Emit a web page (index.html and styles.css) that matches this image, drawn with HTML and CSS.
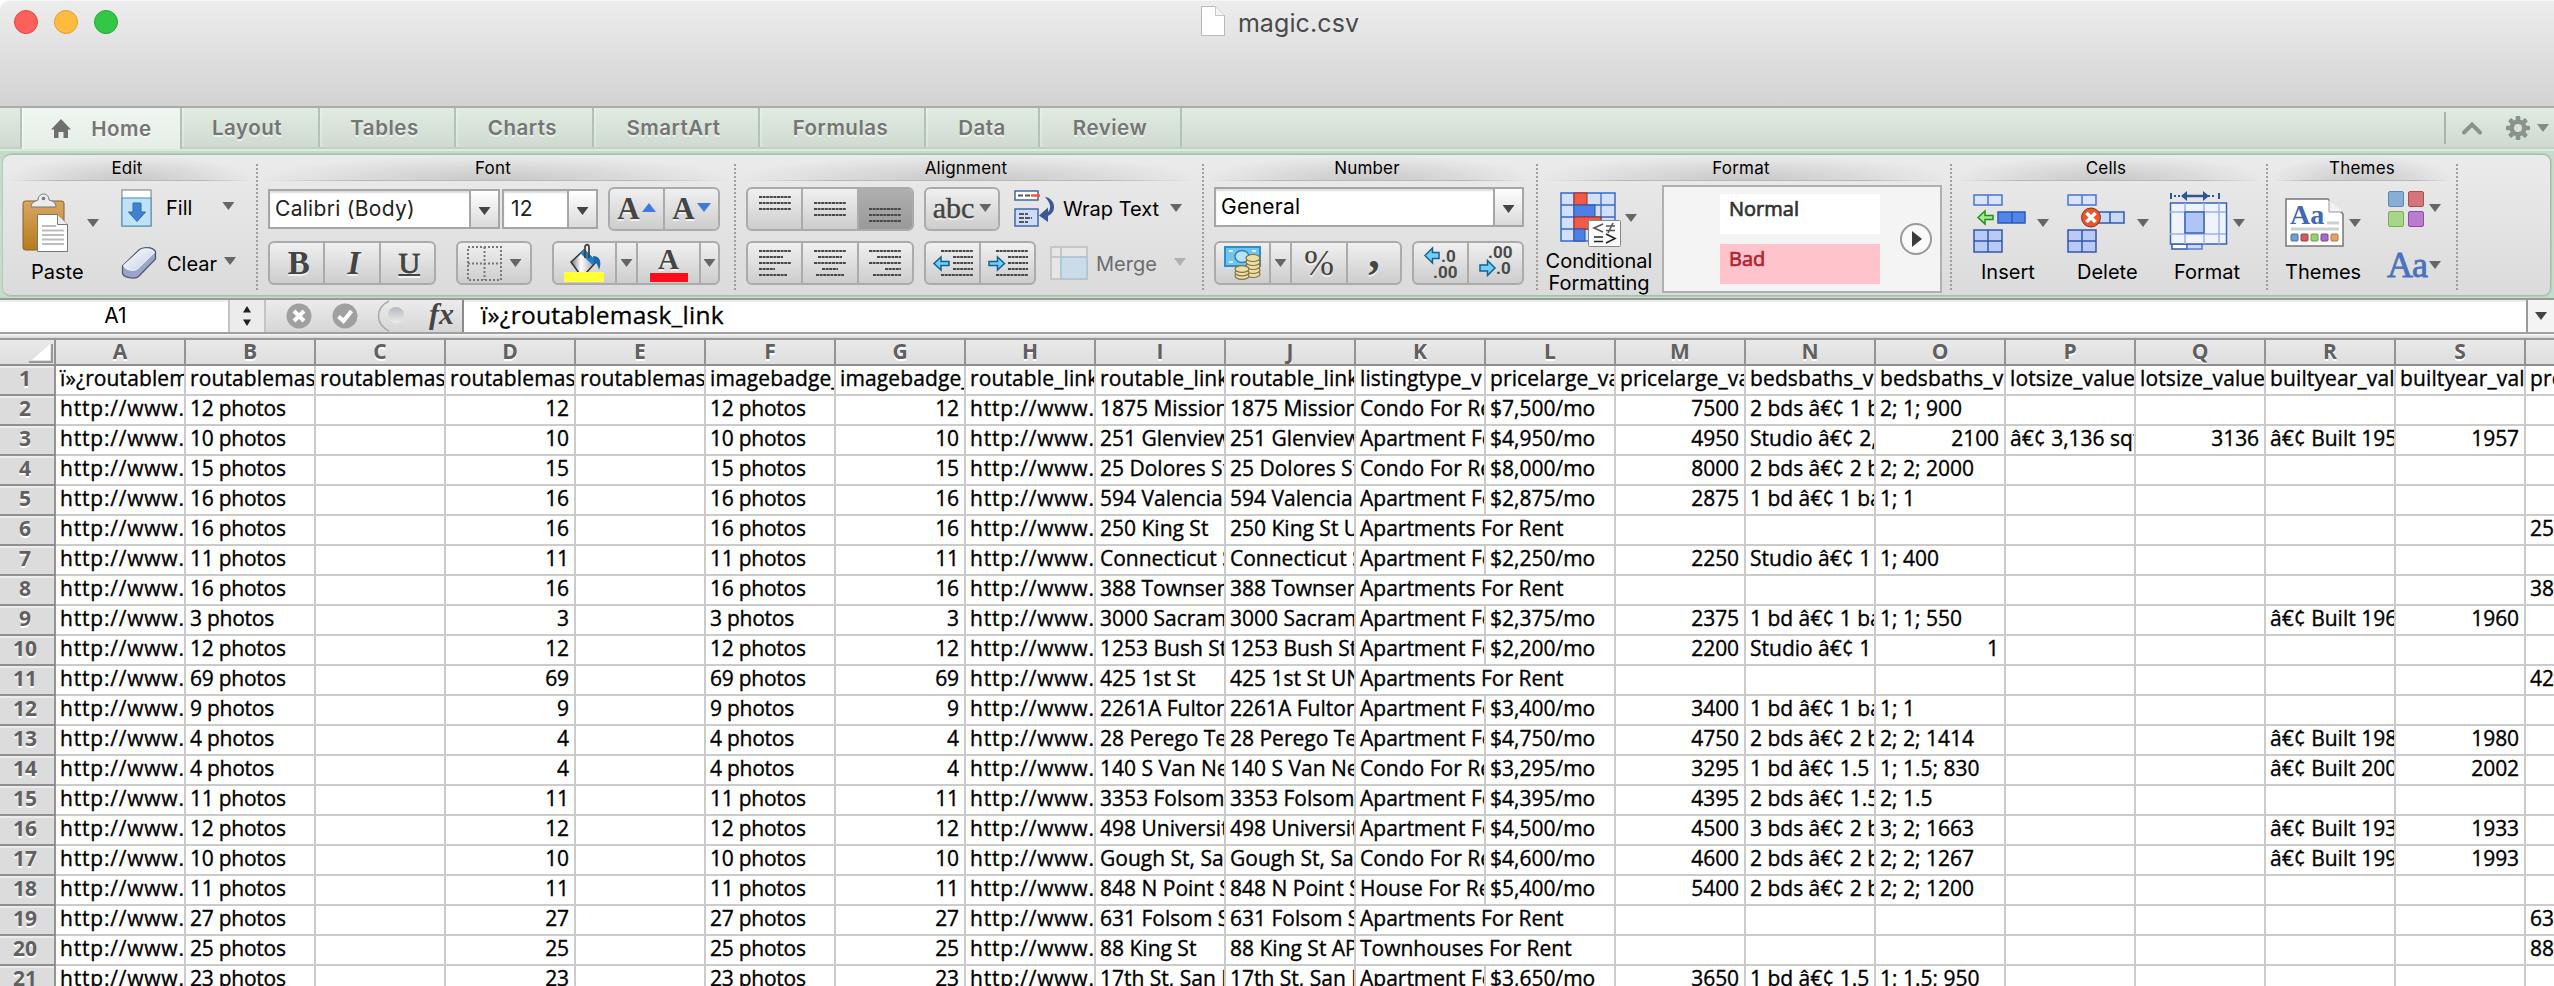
FILE: index.html
```html
<!DOCTYPE html>
<html lang="en">
<head>
<meta charset="utf-8">
<title>magic.csv</title>
<link rel="stylesheet" href="styles.css">
</head>
<body>
<div class="window">
  <header class="titlebar">
    <div class="lights"><i class="light red"></i><i class="light amber"></i><i class="light green"></i></div>
    <div class="doc-title">
      <svg width="26" height="32" viewBox="0 0 26 32"><path d="M1.500 1.500h14l9 9v20h-23z" fill="#fff" stroke="#b9b9b9"/><path d="M15.500 1.500v9h9" fill="#f4f4f4" stroke="#c4c4c4"/></svg>
      <span>magic.csv</span>
    </div>
  </header>

  <nav class="tabs">
    <span class="tab-edge"></span>
    <span class="tab home active"><svg width="20" height="20" viewBox="0 0 20 20"><path d="M10 0 20 10.500h-3V19h-4.500v-6h-5v6H3v-8.500H0z" fill="#6f6f6f"/></svg>Home</span>
    <span class="tab t-layout">Layout</span>
    <span class="tab t-tables">Tables</span>
    <span class="tab t-charts">Charts</span>
    <span class="tab t-smart">SmartArt</span>
    <span class="tab t-formulas">Formulas</span>
    <span class="tab t-data">Data</span>
    <span class="tab t-review">Review</span>
    <span class="tab-tools">
      <svg class="chev" width="20" height="14" viewBox="0 0 20 14"><path d="M2 11.500 10 3.500l8 8" fill="none" stroke="#8b928c" stroke-width="4" stroke-linecap="round"/></svg>
      <svg class="gear" width="24" height="24" viewBox="-12 -12 24 24"><g fill="#8b928c"><circle r="8.500"/><g id="teeth"><rect x="-2.300" y="-12" width="4.600" height="24" rx="1"/><rect x="-12" y="-2.300" width="24" height="4.600" rx="1"/></g><use href="#teeth" transform="rotate(45)"/></g><circle r="4" fill="#d8e2d9"/></svg>
      <i class="caret soft"></i>
    </span>
  </nav>

  <div class="ribbon-wrap">
  <section class="ribbon">
    <div class="group g-edit">
      <h2>Edit</h2>
      <div class="body">
        <div class="big paste">
          <div class="pic">
            <svg width="48" height="60" viewBox="0 0 48 60"><defs><linearGradient id="wood" x2="0" y2="1"><stop offset="0" stop-color="#d9a765"/><stop offset="1" stop-color="#b67d18"/></linearGradient></defs>
              <rect x="1" y="8" width="41" height="49" rx="2.500" fill="url(#wood)" stroke="#8a5f22"/>
              <path d="M9 14c0-5 5-6 7-7 0-3 2-6 5.500-6S27 4 27 7c3 1 7 2 7 7z" fill="#ececec" stroke="#777"/><circle cx="21.500" cy="5.500" r="1.800" fill="#777"/>
              <path d="M15.500 21.500h20l10 10v27h-30z" fill="#fff" stroke="#777"/><path d="M35.500 21.500v10h10" fill="#eee" stroke="#777"/>
              <path d="M20 33h14M20 37.500h22M20 42h22M20 46.500h22M20 51h22" stroke="#bdbdbd" stroke-width="1.800"/></svg>
            <i class="caret"></i>
          </div>
          <span>Paste</span>
        </div>
        <div class="stack">
          <div class="row fill"><svg width="32" height="38" viewBox="0 0 32 38"><rect x="1" y="1" width="29" height="36" fill="#fff" stroke="#777"/><rect x="1" y="9" width="29" height="28" fill="#bfe3f6" stroke="#4d87b5"/><path d="M12 14h8v9h4.500L16 32.500 7.500 23H12z" fill="#3f83cf" stroke="#2d6bb0"/></svg><span>Fill</span><i class="caret"></i></div>
          <div class="row clear"><svg width="36" height="34" viewBox="0 0 36 34"><defs><linearGradient id="rub" x2="1" y2="1"><stop offset="0" stop-color="#fff"/><stop offset="1" stop-color="#c3cce4"/></linearGradient></defs><path d="M1.500 20 18 4c3-3 14-4 16.500 1.500V13L17.500 30.500c-3 3-16 1.500-16-4z" fill="#9ba6c6" stroke="#4f5a78" stroke-width="1.300"/><path d="M2.500 19.500 19 4.500c3-2.500 12-2.500 14.500 2L16.500 23c-3 2.500-12 1.500-14-3.500z" fill="url(#rub)" stroke="#fff" stroke-width=".8"/></svg><span>Clear</span><i class="caret"></i></div>
        </div>
      </div>
    </div>

    <div class="group g-font">
      <h2>Font</h2>
      <div class="body two">
        <div class="line">
          <div class="combo font-name"><span>Calibri (Body)</span><b><i class="caret dark"></i></b></div>
          <div class="combo font-size"><span>12</span><b><i class="caret dark"></i></b></div>
          <div class="seg size-seg"><span class="serif">A<svg width="14" height="9" viewBox="0 0 14 9"><path d="M0 9 7 0l7 9z" fill="#3f7bdc"/></svg></span><span class="serif">A<svg width="14" height="9" viewBox="0 0 14 9"><path d="M0 0h14L7 9z" fill="#3f7bdc"/></svg></span></div>
        </div>
        <div class="line">
          <div class="seg biu"><span class="serif bold">B</span><span class="serif ital">I</span><span class="serif under">U</span></div>
          <div class="seg border-seg"><span><svg width="35" height="35" viewBox="0 0 35 35"><path d="M1 1h33v33H1zM17.500 1v33M1 17.500h33" fill="none" stroke="#777" stroke-width="2" stroke-dasharray="2 2"/></svg><i class="caret"></i></span></div>
          <div class="seg color-seg">
            <span class="w1"><svg width="42" height="40" viewBox="0 0 42 40"><defs><linearGradient id="tin"><stop offset="0" stop-color="#777"/><stop offset=".4" stop-color="#fff"/><stop offset="1" stop-color="#999"/></linearGradient></defs><path d="M7 19 20 7l12 12-10 11H15z" fill="url(#tin)" stroke="#333" stroke-width="1.500"/><path d="M16 10l4-4 12 12-3.500 4z" fill="#1b7fd0"/><path d="M29 13c7 0 9 6 6 14-1-4-2-7-5-9z" fill="#1768ad"/><path d="M21 15V4c0-3 4-3 4 0v11" fill="none" stroke="#444" stroke-width="1.800"/><rect x="0" y="29" width="40" height="10" fill="#ffff35"/></svg></span>
            <span class="w2"><i class="caret"></i></span>
            <span class="w3 serif fontcolor">A<em></em></span>
            <span class="w4"><i class="caret"></i></span>
          </div>
        </div>
      </div>
    </div>

    <div class="group g-align">
      <h2>Alignment</h2>
      <div class="body two">
        <div class="line">
          <div class="seg s3">
            <span><svg class="ln" width="32" height="32"><path d="M0 4h32M0 10h32M0 16h32"/></svg></span>
            <span><svg class="ln" width="32" height="32"><path d="M0 10h32M0 16h32M0 22h32"/></svg></span>
            <span class="pressed"><svg class="ln" width="32" height="32"><path d="M0 16h32M0 22h32M0 28h32"/></svg></span>
          </div>
          <div class="seg abc"><span class="serif">abc<i class="caret"></i></span></div>
          <div class="row wrap"><svg width="42" height="38" viewBox="0 0 42 38"><rect x="1" y="1" width="23" height="9" fill="#fff" stroke="#4466a8" stroke-width="1.500"/><path d="M4 5.500h12" stroke="#555" stroke-width="2" stroke-dasharray="5 2"/><path d="M17 5.500h9" stroke="#ff5238" stroke-width="2.500"/><rect x="1" y="19" width="23" height="17" fill="#cddcf8" stroke="#4466a8" stroke-width="1.500"/><path d="M5 24h9M5 28h13M5 32h9" stroke="#555" stroke-width="1.800" stroke-dasharray="5 1"/><path d="M31 7c9 1 12 12 6 17l-3 2v6l-9-6.500 9-8V22c4-4 2-10-3-15z" fill="#3b5796"/></svg><span>Wrap Text</span><i class="caret"></i></div>
        </div>
        <div class="line">
          <div class="seg s3">
            <span><svg class="ln" width="32" height="32"><path d="M0 4h32M0 10h24M0 16h32M0 22h16M0 28h28"/></svg></span>
            <span><svg class="ln" width="32" height="32"><path d="M0 4h32M4 10h24M0 16h32M8 22h16M2 28h28"/></svg></span>
            <span><svg class="ln" width="32" height="32"><path d="M0 4h32M8 10h24M0 16h32M16 22h16M4 28h28"/></svg></span>
          </div>
          <div class="seg indent">
            <span><svg class="ln" width="40" height="32"><path d="M8 4h32M20 10h20M20 16h20M20 22h20M8 28h32"/><path class="arr" d="M1 16.500 8 10v4.500h8v4H8V23z"/></svg></span>
            <span><svg class="ln" width="40" height="32"><path d="M8 4h32M20 10h20M20 16h20M20 22h20M8 28h32"/><path class="arr" d="M16.500 16.500 9.500 10v4.500H1v4h8.500V23z"/></svg></span>
          </div>
          <div class="row merge"><svg width="38" height="34" viewBox="0 0 38 34"><rect x="1" y="1" width="36" height="32" fill="#e6e6e6" stroke="#c6c6c6" stroke-width="2"/><path d="M11 1v32M1 11h36" stroke="#c6c6c6" stroke-width="2"/><rect x="11" y="11" width="26" height="22" fill="#ccdbe8" stroke="#a9c4d8" stroke-width="1.500"/></svg><span>Merge</span><i class="caret faint"></i></div>
        </div>
      </div>
    </div>

    <div class="group g-number">
      <h2>Number</h2>
      <div class="body two">
        <div class="line">
          <div class="combo num"><span>General</span><b><i class="caret dark"></i></b></div>
        </div>
        <div class="line">
          <div class="seg money">
            <span class="w1"><svg width="38" height="34" viewBox="0 0 38 34"><rect x="1" y="1" width="35" height="19" fill="#74c3ee" stroke="#2c8fc9" stroke-width="2"/><ellipse cx="18" cy="10.500" rx="7" ry="6" fill="#b8e2f7" stroke="#2c80b5" stroke-width="1.500"/><path d="M5 5h4M5 16h4M28 5h4" stroke="#d7f0fb" stroke-width="2"/><g fill="#e9dfad" stroke="#85733a" stroke-width="1.200"><ellipse cx="29" cy="28" rx="7" ry="3.500"/><ellipse cx="29" cy="24" rx="7" ry="3.500"/><ellipse cx="29" cy="20" rx="7" ry="3.500"/><ellipse cx="29" cy="16" rx="7" ry="3.500"/><ellipse cx="29" cy="12" rx="7" ry="3.500"/><ellipse cx="18" cy="30" rx="7" ry="3.300"/><ellipse cx="18" cy="26.500" rx="7" ry="3.300"/><ellipse cx="18" cy="23" rx="7" ry="3.300"/></g></svg></span>
            <span class="w2"><i class="caret"></i></span>
            <span class="w3 serif pct">%</span>
            <span class="w4 serif comma">,</span>
          </div>
          <div class="seg dec">
            <span><svg width="36" height="36" viewBox="0 0 36 36"><path class="arr" d="M2 10.500 9.500 3v4.500H16v6H9.500V18z"/><text x="18" y="17">.0</text><text x="10" y="33">.00</text></svg></span>
            <span><svg width="36" height="36" viewBox="0 0 36 36"><text x="10" y="13">.00</text><path class="arr" d="M17 23 9.500 15.500V20H2v6h7.500v4.500z"/><text x="18" y="29">.0</text></svg></span>
          </div>
        </div>
      </div>
    </div>

    <div class="group g-format">
      <h2>Format</h2>
      <div class="body">
        <div class="big cond">
          <div class="pic">
            <svg width="62" height="56" viewBox="0 0 62 56"><rect x="1" y="1" width="54" height="48" fill="#d3e0fb" stroke="#3a69c4" stroke-width="1.500"/><path d="M14 1v48M41 1v48M1 13h54M1 25h54M1 37h54" stroke="#3a69c4" stroke-width="1.300"/><rect x="14" y="1" width="13" height="12" fill="#f25a48" stroke="#a32b20"/><rect x="14" y="13" width="21" height="12" fill="#4d80e6" stroke="#2b53a8"/><rect x="14" y="25" width="27" height="12" fill="#f25a48" stroke="#a32b20"/><rect x="14" y="37" width="11" height="12" fill="#4d80e6" stroke="#2b53a8"/><rect x="28.500" y="28.500" width="32" height="26" rx="1" fill="#fbfbfb" stroke="#888"/><g fill="none" stroke="#555" stroke-width="1.600"><path d="M43 32 34 36l9 4M46 34h9M46 38.500h9M53 31l-5 10"/><path d="M34 45h9M34 49.500h9M46 42l9 4.500L46 51" stroke="#222"/></g></svg>
            <i class="caret"></i>
          </div>
          <span>Conditional<br>Formatting</span>
        </div>
        <div class="gallery">
          <div class="styles"><span class="normal">Normal</span><span class="bad">Bad</span></div>
          <svg width="34" height="34" viewBox="0 0 34 34"><circle cx="17" cy="17" r="15" fill="#fafafa" stroke="#999" stroke-width="2"/><path d="M13 9v16l10-8z" fill="#3c3c3c"/></svg>
        </div>
      </div>
    </div>

    <div class="group g-cells">
      <h2>Cells</h2>
      <div class="body">
        <div class="big c-insert">
          <div class="pic"><svg width="54" height="60" viewBox="0 0 54 60"><g stroke-width="1.500"><path d="M1 1h28v10H1zM15 1v10" fill="#d9e3fb" stroke="#4a74cc"/><path d="M25 18h27v11H25zM39 18v11" fill="#5285ea" stroke="#2f5ab5"/><path d="M1 36h28v22H1zM15 36v22M1 47h28" fill="#b9cbf5" stroke="#3557a8"/></g><path d="M5 23.500 12 17v4.500h8v4h-8V30z" fill="#9cf28a" stroke="#2a8b1e" stroke-width="1.500"/></svg><i class="caret"></i></div><span>Insert</span>
        </div>
        <div class="big c-delete">
          <div class="pic"><svg width="60" height="60" viewBox="0 0 60 60"><g stroke-width="1.500"><path d="M1 1h28v10H1zM15 1v10" fill="#d9e3fb" stroke="#4a74cc"/><path d="M25 18h32v11H25zM43 18v11" fill="#cbd9f8" stroke="#2f5ab5"/><path d="M1 36h28v22H1zM15 36v22M1 47h28" fill="#b9cbf5" stroke="#3557a8"/></g><circle cx="24" cy="23.500" r="9.500" fill="#e8562b" stroke="#8c2f14"/><path d="M19.500 19l9 9m0-9-9 9" stroke="#fff" stroke-width="3.500"/></svg><i class="caret"></i></div><span>Delete</span>
        </div>
        <div class="big c-format">
          <div class="pic"><svg width="60" height="60" viewBox="0 0 60 60"><path d="M2 2v6M50 2v6" stroke="#2f5592" stroke-width="2"/><path d="M5 5h8M39 5h8" stroke="#2f5592" stroke-width="2" stroke-dasharray="2 2"/><path d="M14 5h24" stroke="#2f5592" stroke-width="2.500"/><path d="M18 0v10l-6-5zM34 0v10l6-5z" fill="#2f5592"/><path d="M3 53v5h15v-5z" fill="#fff" stroke="#3557a8" stroke-width="1.500"/><path d="M18 53v5h15v-5z" fill="#cbd9f8" stroke="#5a7fd0" stroke-width="1.500"/><rect x="1.500" y="12" width="56" height="41" fill="#eef3fe" stroke="#3a62b8" stroke-width="1.500"/><path d="M16 12v41M35 12v41M50 12v41M1 21h56M1 43h56" stroke="#9db4e8" stroke-width="1.500"/><rect x="16" y="21" width="19" height="21" fill="#b0c5f4" stroke="#3a62b8" stroke-width="1.500"/></svg><i class="caret"></i></div><span>Format</span>
        </div>
      </div>
    </div>

    <div class="group g-themes">
      <h2>Themes</h2>
      <div class="body">
        <div class="big c-themes">
          <div class="pic"><svg width="60" height="50" viewBox="0 0 60 50"><path d="M1 1h42l15 15v32H1z" fill="#fff" stroke="#777" stroke-width="1.500"/><path d="M44 1v13h14" fill="#f2f2f2" stroke="#999"/><text x="5" y="26" class="aa">Aa</text><path d="M42 25h12M6 31h48" stroke="#cfcfcf" stroke-width="3"/><g stroke-width="1"><rect x="6" y="36" width="7" height="7" rx="1" fill="#6f9fd0" stroke="#4471a8"/><rect x="16" y="36" width="7" height="7" rx="1" fill="#cf5f66" stroke="#a53940"/><rect x="26" y="36" width="7" height="7" rx="1" fill="#9bd070" stroke="#66a03a"/><rect x="36" y="36" width="7" height="7" rx="1" fill="#a86cc4" stroke="#7c3fa0"/><rect x="46" y="36" width="7" height="7" rx="1" fill="#e3a468" stroke="#b87531"/></g></svg><i class="caret"></i></div><span>Themes</span>
        </div>
        <div class="stack theme-stack">
          <div class="row"><svg width="36" height="36" viewBox="0 0 36 36"><rect x=".5" y=".5" width="15" height="15" rx="1.500" fill="#86aed6" stroke="#5b87b8"/><rect x="20.500" y=".5" width="15" height="15" rx="1.500" fill="#d2767b" stroke="#b34a50"/><rect x=".5" y="20.500" width="15" height="15" rx="1.500" fill="#a9d588" stroke="#78b04c"/><rect x="20.500" y="20.500" width="15" height="15" rx="1.500" fill="#b87ccc" stroke="#8f4bb0"/></svg><i class="caret"></i></div>
          <div class="row"><span class="bigaa">Aa</span><i class="caret"></i></div>
        </div>
      </div>
    </div>
  </section>
  </div>

  <div class="formula">
    <div class="namebox">A1</div>
    <div class="stepper"><svg width="12" height="22" viewBox="0 0 12 22"><path d="M2 7.500 6 1l4 6.500zM2 14.500h8L6 21z" fill="#222"/></svg></div>
    <div class="fx-tools">
      <svg width="26" height="26" viewBox="0 0 26 26"><circle cx="13" cy="13" r="12.500" fill="#a0a0a0"/><path d="M8 8l10 10m0-10L8 18" stroke="#fff" stroke-width="4"/></svg>
      <svg width="26" height="26" viewBox="0 0 26 26"><circle cx="13" cy="13" r="12.500" fill="#a0a0a0"/><path d="M6.500 13.500 11.500 18l8-10" fill="none" stroke="#fff" stroke-width="4"/></svg>
      <svg width="32" height="32" viewBox="0 0 32 32"><defs><linearGradient id="ball" x2="0" y2="1"><stop offset="0" stop-color="#b4b8c0"/><stop offset="1" stop-color="#ececec"/></linearGradient></defs><path d="M12 1C-2 8-2 24 12 31" fill="none" stroke="#aaa" stroke-width="1.500"/><circle cx="19" cy="15" r="8" fill="url(#ball)"/></svg>
      <span class="fx">fx</span>
    </div>
    <div class="formula-text">ï»¿routablemask_link</div>
    <div class="formula-drop"><i class="caret dark"></i></div>
  </div>
  <div class="splitter"></div>

  <div class="sheet" id="sheet"></div>
</div>
<script src="sheet.js"></script>
</body>
</html>
```

FILE: styles.css
```css
* { box-sizing: border-box; }
body { margin: 0; font-family: Inter, "Liberation Sans", sans-serif; color: #000; background: #fff; overflow: hidden; }
svg { display: block; flex: none; overflow: visible; }
i, em { font-style: normal; }
.window { width: 2554px; height: 986px; overflow: hidden; display: flex; flex-direction: column; }

/* title bar */
.titlebar { flex: none; height: 108px; display: grid; grid-template-columns: 1fr auto 1fr; align-items: start; background: linear-gradient(#ededed, #d3d3d3); border-bottom: 2px solid #ababab; border-top: 1px solid #f6f6f6; border-top-left-radius: 10px; }
.lights { display: flex; gap: 16px; padding: 9px 0 0 14px; }
.light { width: 24px; height: 24px; border-radius: 50%; border: 1px solid #e2463f; background: #fc605b; }
.light.amber { background: #fdbc40; border-color: #e0a032; }
.light.green { background: #33c748; border-color: #25a636; }
.doc-title { display: flex; gap: 12px; padding-top: 4px; font-size: 25px; line-height: 36px; color: #4a4a4a; letter-spacing: 0.1px; padding-left: 5px; }

/* tabs */
.tabs { flex: none; height: 41px; display: flex; background: linear-gradient(#e0ebe1, #cfdbd0); border-bottom: 2px solid #c2d0c4; }
.tab-edge { width: 22px; border-right: 2px solid #b4c5b7; }
.tab { display: flex; align-items: center; justify-content: center; font-size: 20.500px; font-weight: 600; letter-spacing: 0.5px; color: #757575; text-shadow: 0 2px 0 rgba(255,255,255,.6); border-right: 2px solid #b2c3b5; box-shadow: inset 2px 0 0 rgba(255,255,255,.25); padding-right: 3px; height: 39px; }
.tab.active { background: linear-gradient(#f0f6f1, #e4eee6); height: 41px; width: 160px; gap: 20px; padding-right: 0; padding-left: 1px; }
.t-layout { width: 138px; padding-right: 6px; } .t-tables { width: 136px; padding-right: 5px; } .t-charts { width: 138px; } .t-smart { width: 166px; padding-right: 5px; }
.t-formulas { width: 166px; } .t-data { width: 114px; padding-right: 0; } .t-review { width: 142px; padding-right: 0; }
.tab-tools { margin: 4px 5px 3px auto; padding-left: 16px; border-left: 2px solid #a9b5ab; display: flex; align-items: center; width: 105px; }
.gear { margin: 0 7px 0 24px; }

.caret { flex: none; display: block; width: 12px; height: 8px; background: #666; clip-path: polygon(0 0, 100% 0, 50% 100%); }
.caret.dark { background: #444; }
.caret.soft { background: #858b86; }
.caret.faint { background: #b0b0b0; }

/* ribbon */
.ribbon-wrap { flex: none; height: 149px; padding: 3px 3px 0 3px; background: #c3ddca; border-top: 2px solid #dcebe0; }
.ribbon { height: 142px; display: flex; border: solid #a4bfab; border-width: 1px 1px 1px 0; box-shadow: 0 0 0 1px #b1cdb8; border-radius: 8px; background: linear-gradient(#ebebeb, #dbdbdb); }
.group { flex: none; position: relative; display: flex; flex-direction: column; }
.group::after { content: ""; position: absolute; right: -1px; top: 9px; height: 126px; border-right: 2px dotted #9e9e9e; }
.group h2 { margin: 0 5px; height: 26px; font-size: 17px; font-weight: 400; line-height: 26px; text-align: center; letter-spacing: .2px; padding-right: 6px; background: radial-gradient(ellipse 50% 100% at 50% 100%, rgba(0,0,0,.14), rgba(0,0,0,0)); border-bottom: 1px solid; border-image: linear-gradient(90deg, transparent, #b9b9b9 20%, #b9b9b9 80%, transparent) 1; }
.g-edit { width: 254px; } .g-font { width: 478px; } .g-align { width: 468px; } .g-number { width: 334px; }
.g-format { width: 414px; } .g-cells { width: 316px; } .g-themes { width: 190px; }
.g-themes h2 { padding-right: 0; }
.body { display: flex; height: 113px; font-size: 20px; }
.body.two { flex-direction: column; gap: 10px; padding: 6px 0 0 11px; }
.line { display: flex; height: 44px; align-items: center; }
.row { display: flex; align-items: center; }
.big { display: flex; flex-direction: column; }
.pic { display: flex; align-items: flex-start; }

.paste { width: 118px; padding: 12px 0 0 19px; }
.paste .caret { margin: 26px 0 0 17px; }
.paste > span { margin: 7px 0 0 9px; }
.stack { display: flex; flex-direction: column; }
.fill { padding-top: 8px; }
.fill span { margin: 0 30px 0 13px; }
.fill .caret, .clear .caret { margin-top: -4px; }
.clear { margin-top: 19px; }
.clear span { margin: 2px 7px 0 10px; }

.combo { display: flex; height: 40px; border: 2px solid #a6a6a6; background: #fff; box-shadow: inset 0 2px 2px #ddd; }
.combo span { flex: 1; padding-left: 5px; line-height: 36px; font-size: 21px; letter-spacing: .3px; color: #222; white-space: nowrap; }
.combo b { width: 29px; border-left: 2px solid #a6a6a6; background: linear-gradient(#fefefe, #dadada); display: flex; align-items: center; justify-content: center; padding-top: 4px; }
.font-name { width: 232px; margin-right: 2px; }
.font-size { width: 96px; margin-right: 10px; }
.font-size span { padding-left: 7px; }
.num { width: 310px; margin-top: -4px; }
.num span { color: #000; }
.seg { flex: none; display: flex; height: 44px; border: 2px solid #ababab; border-radius: 6px; background: linear-gradient(#f0f0f0, #cdcdcd); overflow: hidden; }
.seg > span { flex: 1; display: flex; align-items: center; justify-content: center; border-left: 2px solid #ababab; }
.seg > span:first-child { border-left: 0; }
.serif { font-family: "Liberation Serif", serif; font-size: 33px; color: #444; text-shadow: 0 2px 0 rgba(255,255,255,.7); }
.size-seg { width: 112px; }
.size-seg span { gap: 2px; font-size: 31px; font-weight: 700; }
.size-seg span svg { margin-bottom: 4px; }
.biu { width: 168px; margin-right: 20px; }
.biu .bold { font-weight: 700; } .biu .ital { font-style: italic; font-weight: 700; } .biu .under { text-decoration: underline; text-decoration-thickness: 2px; font-size: 30px; -webkit-text-stroke: .6px; }
.biu span { padding-left: 4px; }
.border-seg { width: 76px; margin-right: 20px; }
.border-seg .caret { margin-left: 8px; }
.color-seg { width: 168px; }
.seg > .w1 { flex: none; width: 61px; } .seg > .w2 { flex: none; width: 21px; } .seg > .w3 { flex: none; width: 63px; }
.fontcolor { flex-direction: column; font-weight: 700; font-size: 29px; line-height: 28px; }
.fontcolor em { width: 38px; height: 9px; background: #fb0d1b; }
.s3 { width: 168px; margin-right: 10px; }
.seg .pressed { background: linear-gradient(#b0b0b0, #999); }
.ln path { fill: none; stroke: #484848; stroke-width: 2; stroke-dasharray: 3 .6; }
.ln path.arr, .arr { fill: #6fd0fb; stroke: #14618f; stroke-width: 1.500; stroke-dasharray: none; }
.abc { width: 76px; margin-right: 14px; }
.abc span { font-size: 30px; gap: 5px; padding-bottom: 2px; -webkit-text-stroke: .4px; }
.wrap span { margin: 0 11px 0 7px; }
.indent { width: 112px; margin-right: 14px; }
.merge span { margin: 1px 17px 0 8px; color: #6c6c6c; }
.wrap .caret, .merge .caret { margin-top: -2px; }
.money { width: 188px; margin-right: 10px; }
.seg.money > .w1 { width: 53px; } .seg.money > .w3 { width: 56px; font-size: 36px; }
.comma { font-size: 46px; font-weight: 700; line-height: 20px; padding-bottom: 20px; }
.dec { width: 112px; }
.dec text { font: 700 17px Roboto, sans-serif; fill: #4a4a4a; }

.cond { width: 125px; padding: 11px 0 0 23px; }
.cond .pic .caret { margin: 22px 0 0 3px; }
.cond > span { margin: 2px 0 0 -22px; width: 122px; text-align: center; line-height: 22px; }
.gallery { width: 280px; height: 108px; margin-top: 4px; border: 2px solid #b0b0b0; background: #f4f4f4; display: flex; align-items: center; padding-left: 56px; gap: 19px; }
.styles { display: flex; flex-direction: column; gap: 10px; font: 20px/30px "Open Sans", sans-serif; }
.styles span { width: 160px; height: 40px; padding-left: 9px; background: #fff; color: #333; -webkit-text-stroke: .7px; }
.styles .bad { background: #ffc4cb; color: #b32331; }

.g-cells .big, .c-themes { padding-top: 13px; }
.g-cells .big > span, .c-themes > span { margin-top: 6px; }
.g-cells .caret, .c-themes .caret { margin-top: 25px; }
.c-insert { width: 94px; margin-left: 22px; }
.c-insert .caret { margin-left: 10px; }
.c-insert > span { padding-left: 8px; }
.c-delete { width: 102px; }
.c-delete .caret { margin-left: 10px; }
.c-delete > span { padding-left: 10px; }
.c-format .pic { margin-top: -3px; }
.g-cells .c-format > span { margin-top: 9px; padding-left: 5px; }
.g-cells .c-format .caret { margin: 28px 0 0 4px; }
.c-themes { margin-left: 18px; width: 103px; }
.c-themes .pic { padding-top: 4px; height: 60px; }
.c-themes .caret { margin: 21px 0 0 4px; }
.aa { font: 700 28px "Liberation Serif", serif; fill: #3f68b5; }
.bigaa { font: 36px/38px "Liberation Serif", serif; -webkit-text-stroke: .8px; color: #4a72bd; width: 41px; letter-spacing: -1px; margin-left: -1px; }
.theme-stack { padding-top: 10px; gap: 19px; }
.theme-stack .caret { margin: -2px 0 0 5px; }
.theme-stack .row + .row .caret { margin-left: 1px; margin-top: 0; }

/* formula bar */
.formula { flex: none; height: 36px; display: flex; border-top: 2px solid #9a9a9a; border-bottom: 2px solid #a0a0a0; background: #fff; box-shadow: inset 0 2px 0 #ededed; }
.namebox { width: 228px; text-align: center; font-size: 21px; line-height: 32px; padding-left: 3px; }
.stepper { width: 38px; background: #ececec; border: solid #c4c4c4; border-width: 0 2px; display: flex; align-items: center; justify-content: center; }
.fx-tools { width: 198px; border-right: 2px solid #8a8a8a; background: linear-gradient(#ececec, #d6d6d6); display: flex; align-items: center; padding-left: 20px; gap: 20px; }
.fx-tools svg + svg + svg { margin-left: -1px; margin-right: 0; }
.fx { font: italic 700 30px/28px "Liberation Serif", serif; color: #444; margin: -4px 0 0 0; }
.formula-text { flex: 1; padding-left: 17px; font: 24.500px/29px "Open Sans", "Noto Sans", sans-serif; letter-spacing: .25px; -webkit-text-stroke: .3px; }
.formula-drop { width: 28px; border-left: 2px solid #9a9a9a; background: #f4f4f4; display: flex; align-items: center; justify-content: center; }
.splitter { flex: none; height: 4px; background: linear-gradient(#f6f6f6, #d8d8d8); }

/* sheet */
.sheet { display: grid; grid-template-columns: 56px repeat(20, 130px); grid-template-rows: 28px repeat(21, 30px); width: 2660px; font: 21px/25px "Open Sans", "Noto Sans", sans-serif; }
.sheet > div { overflow: hidden; white-space: pre; }
.col { background: linear-gradient(#e9e9e9, #dedede); border-right: 2px solid #949494; border-bottom: 2px solid #8f8f8f; text-align: center; font-weight: 700; color: #606060; text-shadow: 0 2px 0 #fff; border-top: 2px solid #999; line-height: 23px; }
.corner { display: flex; justify-content: flex-end; padding: 3px 1px 0 0; }
.rowhead { background: #dcdcdc; border-right: 2px solid #949494; border-bottom: 2px solid #8f8f8f; box-shadow: inset 0 2px 0 #ececec; text-align: center; font-weight: 700; color: #606060; text-shadow: 0 2px 0 #fff; padding-right: 4px; }
.cell { border-right: 2px solid #cbcbcb; border-bottom: 2px solid #cbcbcb; padding: 0 0 0 4px; -webkit-text-stroke: .35px; }
.cell.head { letter-spacing: .12px; }
.cell.num-cell { text-align: right; padding: 0 5px 0 0; letter-spacing: -.1px; }
.cell.span2 { grid-column: span 2; }
.cell.url { letter-spacing: .8px; }
.cell.photos { letter-spacing: -.25px; }
```

FILE: sheet.js
```javascript
const header = ["ï»¿routablemask_link", "routablemas", "routablemas", "routablemas", "routablemas", "imagebadge_v", "imagebadge_v", "routable_link", "routable_link", "routable_link", "listingtype_v", "pricelarge_va", "pricelarge_va", "bedsbaths_v", "bedsbaths_v", "lotsize_value", "lotsize_value", "builtyear_val", "builtyear_val", "prop"];

// photos, address, full address, listing type, price, beds, parsed beds, extra columns by index (P=0 … T=4)
const listings = [
  [12, "1875 Mission", "", "Condo For Re", 7500, "2 bds â€¢ 1 ba", "2; 1; 900"],
  [10, "251 Glenview", "", "Apartment Fo", 4950, "Studio â€¢ 2,1", 2100, ["â€¢ 3,136 sqf", 3136, "â€¢ Built 195", 1957]],
  [15, "25 Dolores St", "", "Condo For Re", 8000, "2 bds â€¢ 2 ba", "2; 2; 2000"],
  [16, "594 Valencia", "", "Apartment Fo", 2875, "1 bd â€¢ 1 ba", "1; 1"],
  [16, "250 King St", "250 King St U", "Apartments For Rent", 0, "", "", ["", "", "", "", "250"]],
  [11, "Connecticut S", "", "Apartment Fo", 2250, "Studio â€¢ 1 ", "1; 400"],
  [16, "388 Townsen", "", "Apartments For Rent", 0, "", "", ["", "", "", "", "388"]],
  [3, "3000 Sacram", "", "Apartment Fo", 2375, "1 bd â€¢ 1 ba", "1; 1; 550", ["", "", "â€¢ Built 196", 1960]],
  [12, "1253 Bush St", "", "Apartment Fo", 2200, "Studio â€¢ 1 ", 1],
  [69, "425 1st St", "425 1st St UN", "Apartments For Rent", 0, "", "", ["", "", "", "", "425"]],
  [9, "2261A Fulton", "", "Apartment Fo", 3400, "1 bd â€¢ 1 ba", "1; 1"],
  [4, "28 Perego Te", "", "Apartment Fo", 4750, "2 bds â€¢ 2 ba", "2; 2; 1414", ["", "", "â€¢ Built 198", 1980]],
  [4, "140 S Van Ne", "", "Condo For Re", 3295, "1 bd â€¢ 1.5", "1; 1.5; 830", ["", "", "â€¢ Built 200", 2002]],
  [11, "3353 Folsom", "", "Apartment Fo", 4395, "2 bds â€¢ 1.5", "2; 1.5"],
  [12, "498 Universit", "", "Apartment Fo", 4500, "3 bds â€¢ 2 ba", "3; 2; 1663", ["", "", "â€¢ Built 193", 1933]],
  [10, "Gough St, Sa", "", "Condo For Re", 4600, "2 bds â€¢ 2 ba", "2; 2; 1267", ["", "", "â€¢ Built 199", 1993]],
  [11, "848 N Point S", "", "House For Re", 5400, "2 bds â€¢ 2 ba", "2; 2; 1200"],
  [27, "631 Folsom S", "", "Apartments For Rent", 0, "", "", ["", "", "", "", "631"]],
  [25, "88 King St", "88 King St AP", "Townhouses For Rent", 0, "", "", ["", "", "", "", "88 K"]],
  [23, "17th St, San F", "", "Apartment Fo", 3650, "1 bd â€¢ 1.5", "1; 1.5; 950"]
];

const sheet = document.getElementById("sheet");

function add(className, text) {
  const el = document.createElement("div");
  el.className = className;
  el.textContent = text;
  sheet.append(el);
  return el;
}

add("col corner", "").innerHTML = '<svg width="24" height="20" viewBox="0 0 24 20"><path d="M0 19h23V1" fill="none" stroke="#999" stroke-width="2"/><path d="M3 17 21 1v16z" fill="#fff"/></svg>';
[..."ABCDEFGHIJKLMNOPQRST"].forEach(letter => add("col", letter));

add("rowhead", 1);
header.forEach(text => add("cell head", text));

listings.forEach(([photos, address, full, type, price, beds, parsed, extra = []], i) => {
  add("rowhead", i + 2);
  const url = "http://www.";
  const label = photos + " photos";
  const values = [url, label, "", photos, "", label, photos, url, address, full || address, type];
  if (price) values.push("$" + price.toLocaleString("en-US") + "/mo", price);
  else values.push("");
  values.push(beds, parsed);
  for (let k = 0; k < 5; k++) values.push(extra[k] ?? "");
  values.forEach(value => {
    const classes = ["cell"];
    if (typeof value === "number") classes.push("num-cell");
    if (value === url) classes.push("url");
    if (value === label) classes.push("photos");
    if (/For Rent$/.test(value)) classes.push("span2");
    add(classes.join(" "), value);
  });
});
```
